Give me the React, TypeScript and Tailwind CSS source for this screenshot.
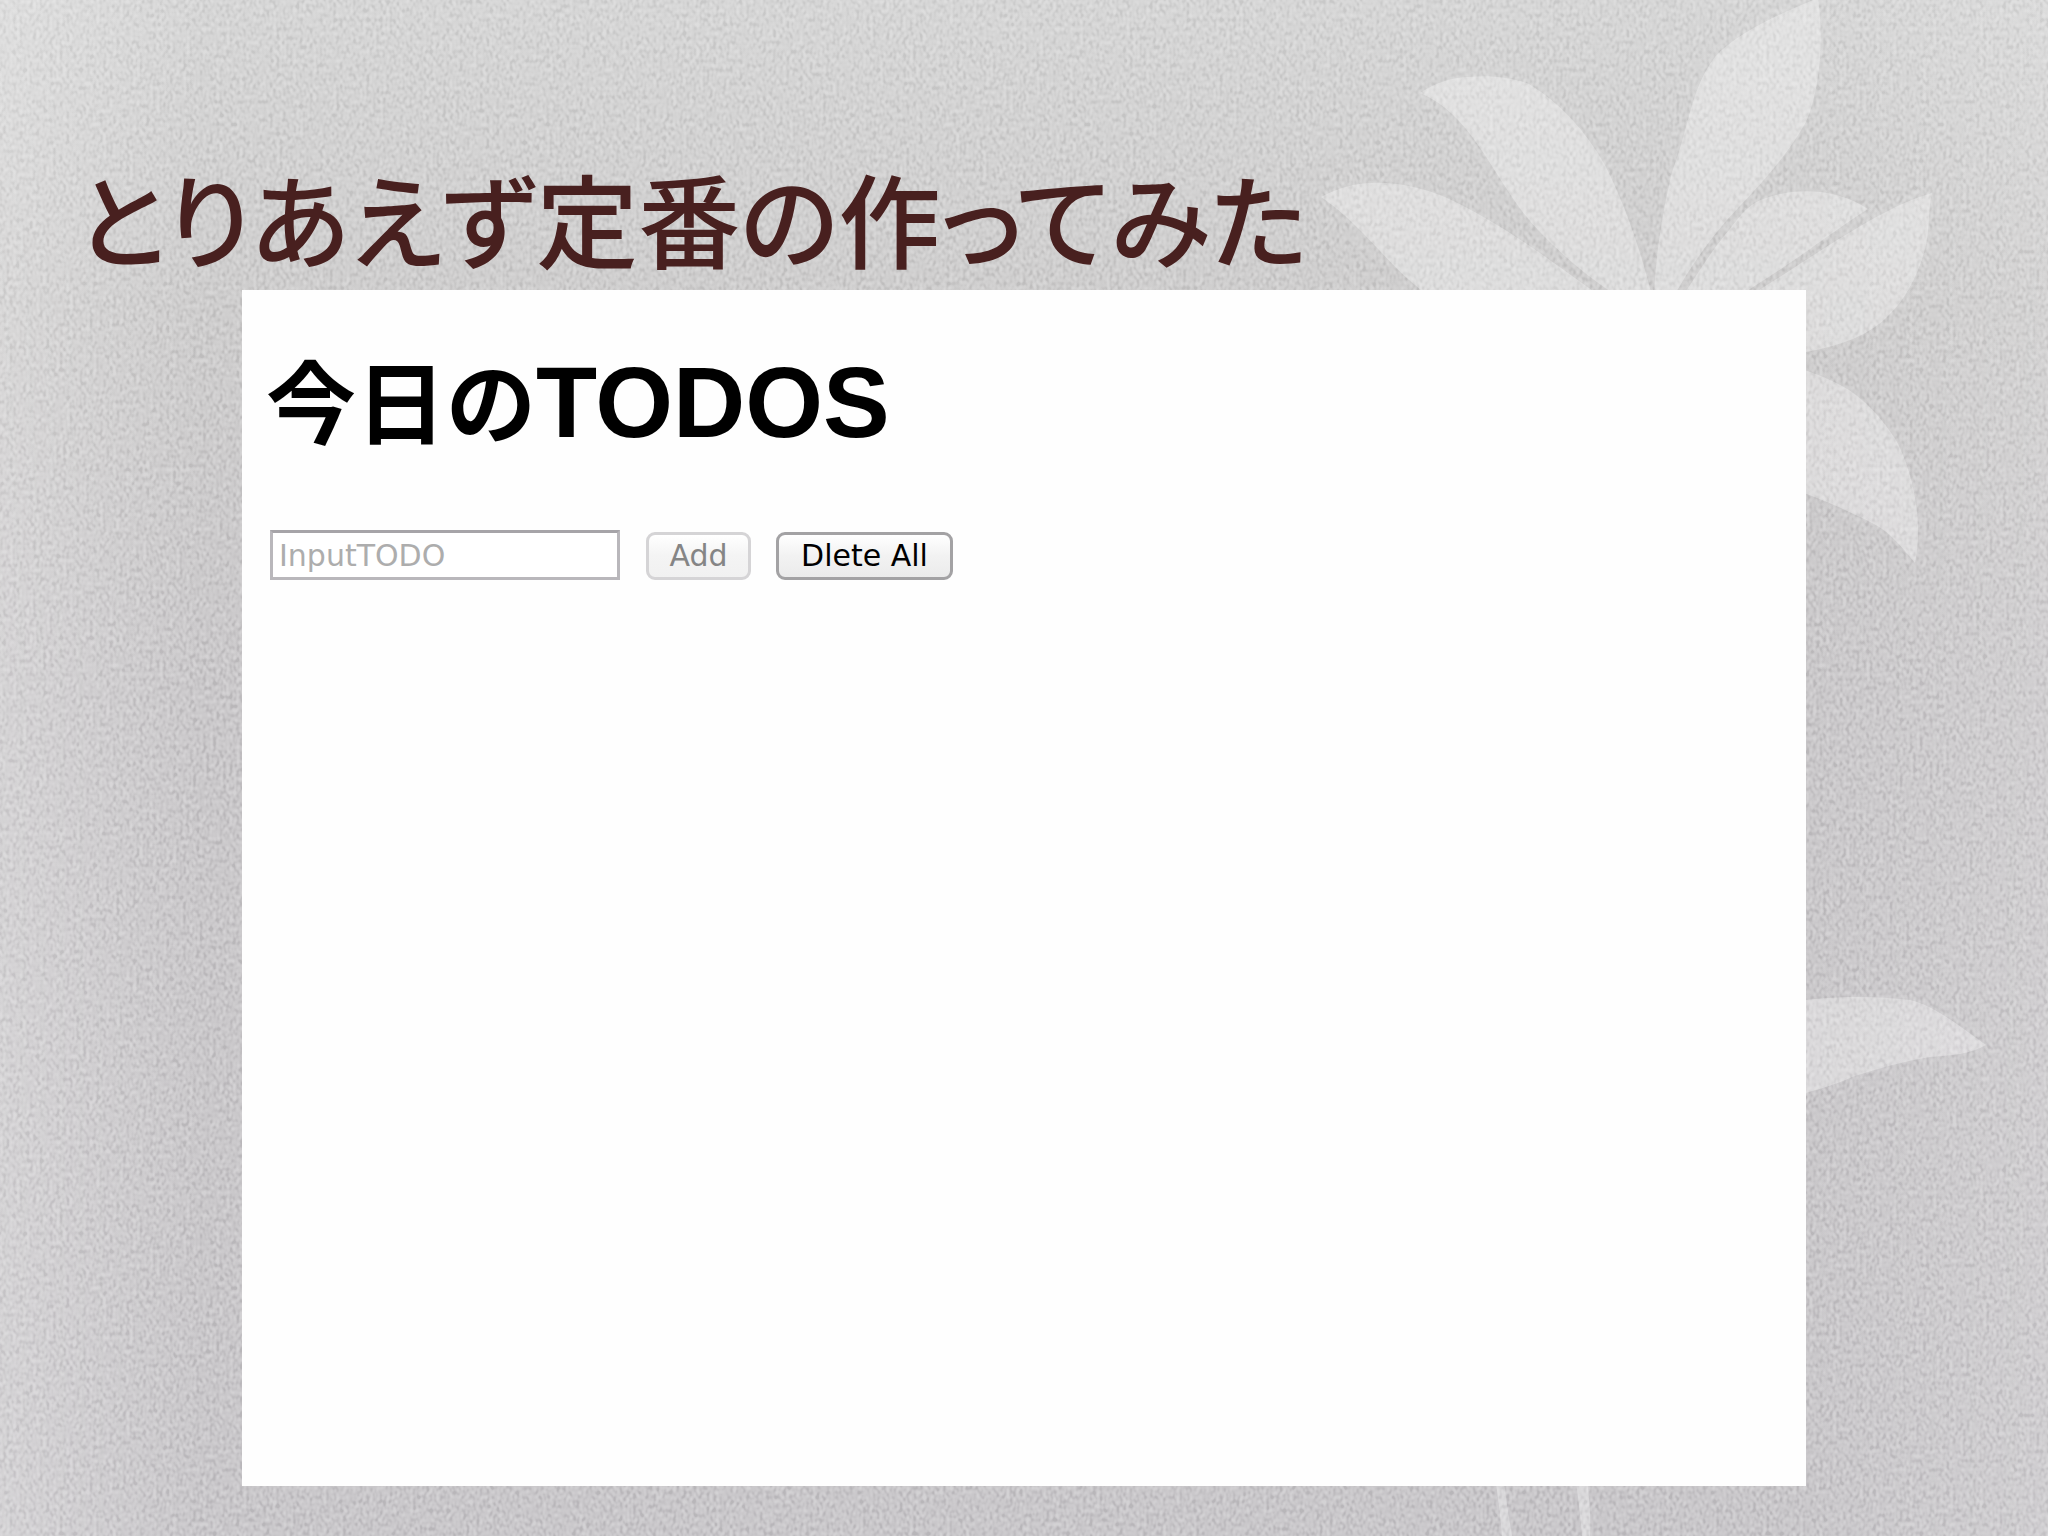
import { useState } from "react";

function FabricBackdrop() {
  return (
    <svg
      className="absolute inset-0 h-full w-full"
      viewBox="0 0 2048 1536"
      preserveAspectRatio="xMaxYMin slice"
      aria-hidden="true"
    >
      <defs>
        <linearGradient id="base" x1="0" y1="0" x2="0" y2="1">
          <stop offset="0" stopColor="#d6d6d6" />
          <stop offset="0.2" stopColor="#cecdcd" />
          <stop offset="0.45" stopColor="#cac8ca" />
          <stop offset="1" stopColor="#c9c7ca" />
        </linearGradient>
        <linearGradient id="side" x1="0" y1="0" x2="1" y2="0">
          <stop offset="0" stopColor="#fff" stopOpacity="0.2" />
          <stop offset="0.1" stopColor="#fff" stopOpacity="0" />
          <stop offset="0.88" stopColor="#fff" stopOpacity="0" />
          <stop offset="1" stopColor="#fff" stopOpacity="0.12" />
        </linearGradient>
        <filter id="weave" x="0" y="0" width="100%" height="100%" colorInterpolationFilters="sRGB">
          <feTurbulence type="fractalNoise" baseFrequency="0.3 0.22" numOctaves="1" seed="7" />
          <feColorMatrix
            type="matrix"
            values="0.5 0.5 0 0 0  0.5 0.5 0 0 0  0.5 0.5 0 0 0  0 0 0 0 1"
          />
          <feComponentTransfer>
            <feFuncR type="linear" slope="3" intercept="-1" />
            <feFuncG type="linear" slope="3" intercept="-1" />
            <feFuncB type="linear" slope="3" intercept="-1" />
          </feComponentTransfer>
        </filter>
      </defs>
      <rect width="2048" height="1536" fill="url(#base)" />
      <rect width="2048" height="1536" fill="url(#side)" />
      <g fill="#fff" fillOpacity="0.3">
        <path d="M1321 197C1338 188 1355 183 1372 183C1396 182 1420 187 1445 197C1500 222 1550 260 1600 296L1660 340L1500 340C1470 325 1440 308 1421 290C1385 262 1362 225 1321 197Z" />
        <path d="M1420 93C1435 83 1450 78 1467 77C1490 75 1510 77 1529 84C1560 103 1585 130 1605 165C1625 205 1640 248 1652 296L1614 294C1585 275 1560 253 1538 230C1495 185 1475 115 1420 93Z" />
        <path d="M1818 -2C1785 12 1740 30 1715 57C1690 90 1690 125 1672 172C1663 210 1656 250 1654 296L1674 296C1690 268 1710 237 1739 207C1770 175 1790 150 1806 122C1820 90 1824 40 1818 -2Z" />
        <path d="M1684 294C1700 270 1712 250 1729 230C1742 213 1750 203 1766 198C1800 186 1840 190 1868 209C1835 230 1790 265 1742 294Z" />
        <path d="M1932 193C1880 208 1825 249 1756 292L1720 340L1806 352C1840 346 1870 335 1888 316C1908 297 1920 270 1926 245C1930 225 1928 210 1932 193Z" />
        <path d="M1780 362C1806 370 1830 378 1849 390C1870 404 1884 422 1896 440C1912 470 1924 520 1915 563C1900 545 1890 532 1872 523C1850 512 1830 502 1780 484Z" />
        <path d="M1780 1004C1820 996 1870 995 1910 1000C1936 1006 1960 1027 1986 1045C1970 1054 1955 1055 1930 1057C1905 1061 1880 1068 1855 1076C1835 1085 1810 1092 1780 1100Z" />
        <path d="M1490 1440L1502 1440C1502 1480 1508 1510 1512 1536L1502 1536C1500 1510 1497 1490 1490 1440Z" />
        <path d="M1570 1440L1584 1440C1586 1480 1592 1510 1590 1536L1582 1536C1580 1510 1576 1480 1570 1440Z" />
      </g>
      <rect width="2048" height="1536" filter="url(#weave)" className="opacity-40 mix-blend-soft-light" />
    </svg>
  );
}

const aqua = "h-12 rounded-[9px] border-[3px] text-[30px] leading-none";

export default function App() {
  const [todo, setTodo] = useState("");

  return (
    <main className="relative isolate flex min-h-screen flex-col overflow-hidden bg-[#cccbcd] px-[76px] pb-[50px] font-['Noto_Sans_CJK_JP',sans-serif]">
      <FabricBackdrop />
      <h1 className="relative mt-[144px] whitespace-nowrap text-[102px] leading-[146px] font-medium text-[#48201f] [font-feature-settings:'palt']">
        とりあえず定番の作ってみた
      </h1>
      <section className="relative mx-[166px] flex-1 bg-[#fefefe] px-7 pt-[50px]">
        <h2 className="ml-[-4px] flex items-baseline whitespace-nowrap text-[90px] leading-[116px] font-bold text-black">
          今日の
          <span className="font-['Liberation_Sans',sans-serif] text-[100px]">TODOS</span>
        </h2>
        <form
          className="mt-[70px] flex items-end font-['DejaVu_Sans',sans-serif]"
          onSubmit={(e) => e.preventDefault()}
        >
          <input
            type="text"
            aria-label="InputTODO"
            placeholder="InputTODO"
            value={todo}
            onChange={(e) => setTodo(e.target.value)}
            className="h-[50px] w-[350px] border-[3px] border-[#b9b7bb] border-t-[#a6a4a8] bg-white px-1.5 text-[30px] leading-none text-black placeholder:text-[#adadad] focus:outline-none"
          />
          <button
            type="submit"
            disabled={!todo}
            className={`${aqua} ml-[26px] w-[105px] border-black bg-linear-to-b from-white via-[#f4f4f4] to-[#f1f1f1] text-black disabled:border-[#d5d4d6] disabled:text-[#858585]`}
          >
            Add
          </button>
          <button
            type="button"
            onClick={() => setTodo("")}
            className={`${aqua} ml-[25px] w-[177px] border-[#a3a2a4] bg-linear-to-b from-white via-[#f2f2f2] to-[#ebebeb] text-black`}
          >
            Dlete All
          </button>
        </form>
      </section>
    </main>
  );
}
